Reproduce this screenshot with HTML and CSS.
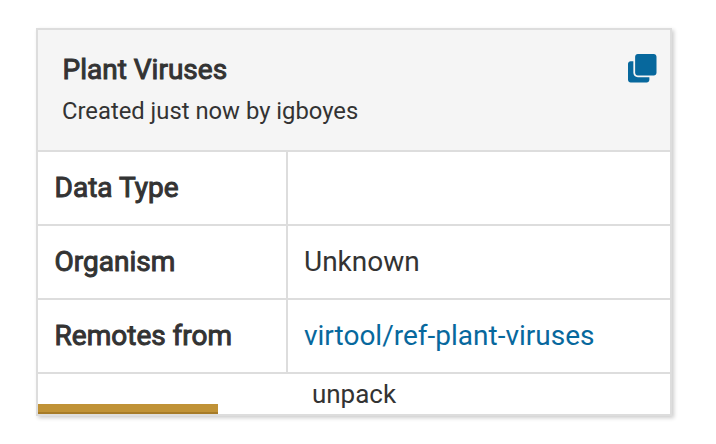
FILE: index.html
```html
<!DOCTYPE html>
<html lang="en">
<head>
<meta charset="utf-8">
<title>Plant Viruses</title>
<link rel="stylesheet" href="styles.css">
</head>
<body>
<article class="card">
  <header class="card-header">
    <div>
      <h1 class="title">Plant Viruses</h1>
      <p class="created">Created just now by igboyes</p>
    </div>
    <svg class="clone" viewBox="0 0 512 512" aria-hidden="true"><path d="M464 0c26.510 0 48 21.490 48 48v288c0 26.510-21.490 48-48 48H176c-26.510 0-48-21.490-48-48V48c0-26.510 21.490-48 48-48h288M176 416c-44.112 0-80-35.888-80-80V128H48c-26.510 0-48 21.490-48 48v288c0 26.510 21.490 48 48 48h288c26.510 0 48-21.490 48-48v-48H176z"/></svg>
  </header>
  <dl class="details">
    <dt>Data Type</dt><dd></dd>
    <dt>Organism</dt><dd>Unknown</dd>
    <dt>Remotes from</dt><dd><a>virtool/ref-plant-viruses</a></dd>
  </dl>
  <footer class="progress">
    <span class="step">unpack</span>
    <div class="bar"></div>
  </footer>
</article>
</body>
</html>
```
FILE: styles.css
```css
* { box-sizing: border-box; }
body { margin: 0; min-height: 444px; padding: 28px 44px 0 36px; background: #fff; color: #333; font-family: Roboto, sans-serif; font-size: 28px; }
.card { height: 388px; border: 2px solid #ddd; box-shadow: 2px 2px 4px rgba(0, 0, 0, .2); }
.card-header { display: flex; justify-content: space-between; height: 122px; padding: 22px 13.5px 0 24px; background: #f5f5f5; border-bottom: 2px solid #ddd; }
.title { margin: 0; padding-left: .5px; font-size: 28px; line-height: 36px; font-weight: 400; -webkit-text-stroke: 1px #333; }
.created { margin: 6px 0 0; font-size: 23.8px; line-height: 34px; }
.clone { width: 28.5px; height: 28.5px; margin-top: 2.3px; fill: #07689d; }
.details { display: grid; grid-template-columns: 250px 1fr; grid-auto-rows: 74px; margin: 0; }
.details dt, .details dd { margin: 0; padding: 0 16px; line-height: 71px; border-bottom: 2px solid #ddd; }
.details dt { padding-left: 16.6px; -webkit-text-stroke: 1px #333; border-right: 2px solid #ddd; }
.details a { color: #07689d; }
.progress { display: flex; flex-direction: column; height: 40px; }
.step { height: 30px; line-height: 40px; font-size: 26px; text-align: center; }
.bar { width: 180px; height: 10px; background: #c09236; border-bottom: 2px solid #a67b28; }
```
